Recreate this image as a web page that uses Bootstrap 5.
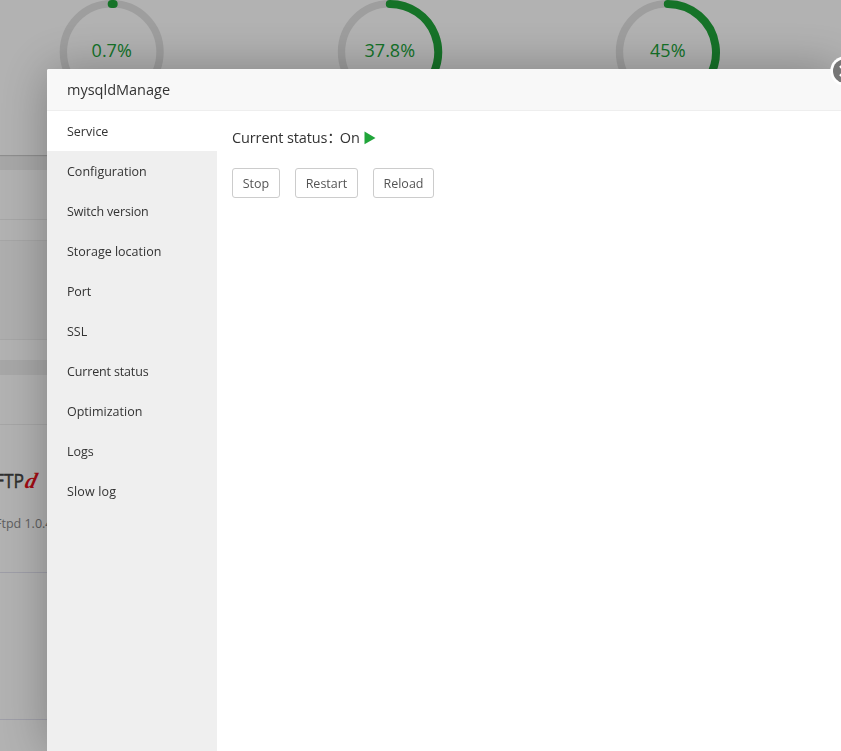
<!DOCTYPE html>
<html lang="en">
<head>
<meta charset="utf-8">
<meta name="viewport" content="width=device-width, initial-scale=1">
<title>mysqldManage</title>
<link href="https://cdn.jsdelivr.net/npm/bootstrap@5.3.0/dist/css/bootstrap.min.css" rel="stylesheet">
<style>
body{font-family:"Open Sans","Noto Sans","Noto Sans CJK SC",sans-serif;font-size:12.5px;line-height:20px;color:#333;background:#f0f0f0;height:751px}
main{height:751px}
.gauges{height:155px;box-shadow:0 1px 1px rgba(0,0,0,.15);padding-left:59px;gap:174px}
.gauge{width:104px;height:104px;overflow:visible}
.gauge text{font-size:18px;fill:#20a53a;text-anchor:middle}
.overview,.software{margin-top:15px}
.overview{height:190px}
.software{height:376px}
.panel-head{height:50px;border-bottom:1px solid #eee}
.overview-body{margin-top:20px;height:100px;background:#f9f9f9;border-top:1px solid #eee;border-bottom:1px solid #eee}
.soft-cell{height:148px;border-bottom:1px solid #e3e3f0}
.soft-cell + .soft-cell{height:147px}
.soft-cell svg{width:47px;height:147px}
.veil{background:rgba(0,0,0,.3);z-index:10}
.dialog{left:47px;top:69px;width:794px;height:682px;z-index:20;box-shadow:1px 1px 50px rgba(0,0,0,.3);border-radius:2px 0 0 0}
.dialog-title{height:42px;padding-left:20px;background:#f8f8f8;border-bottom:1px solid #eee;font-size:14.5px;border-radius:2px 0 0 0}
.side{width:170px;background:#efefef}
.side a{height:40px;padding:2px 0 0 20px;color:#333;text-decoration:none}
.side a.active{background:#fff}
.side .tight{letter-spacing:-.15px}
.side .wide{letter-spacing:.15px}
.pane{padding:17px 15px}
.status{font-size:14.5px;height:20px}
.st-label{letter-spacing:-.12px}
.st-on{margin-left:-2px}
.acts{gap:15px;margin-top:20px}
.act{font-size:12.5px;line-height:18px;height:30px;padding:6px 0 4px;border:1px solid #ccc;border-radius:3px;color:#555;background:#fff}
.w1{width:48px}.w2{width:63px}.w3{width:61px}
.closer{left:830px;top:56px;width:11px;height:30px;z-index:30}
</style>
<script src="https://cdn.jsdelivr.net/npm/bootstrap@5.3.0/dist/js/bootstrap.bundle.min.js"></script>
</head>
<body class="overflow-hidden">
<main class="overflow-hidden">
  <section class="gauges d-flex bg-white">
    <svg class="gauge flex-shrink-0" viewBox="0 0 104 104"><circle cx="52.7" cy="52" r="48.3" fill="none" stroke="#e3e3e3" stroke-width="7.4"/><path d="M52.7 4h2" stroke="#20a53a" stroke-width="8" stroke-linecap="round"/><text x="52.7" y="57">0.7%</text></svg>
    <svg class="gauge flex-shrink-0" viewBox="0 0 104 104"><circle cx="52.8" cy="52" r="48.3" fill="none" stroke="#e3e3e3" stroke-width="7.4"/><path d="M52.8 4A48.3 48.3 0 0 1 86 87.5" fill="none" stroke="#20a53a" stroke-width="8" stroke-linecap="round"/><text x="52.8" y="57">37.8%</text></svg>
    <svg class="gauge flex-shrink-0" viewBox="0 0 104 104"><circle cx="52.8" cy="52" r="48.3" fill="none" stroke="#e3e3e3" stroke-width="7.4"/><path d="M52.8 4A48.3 48.3 0 0 1 67.7 98.2" fill="none" stroke="#20a53a" stroke-width="8" stroke-linecap="round"/><text x="52.8" y="57">45%</text></svg>
  </section>
  <section class="overview bg-white">
    <div class="panel-head"></div>
    <div class="overview-body"></div>
  </section>
  <section class="software bg-white">
    <div class="panel-head"></div>
    <div class="soft-cell">
      <svg viewBox="0 0 47 147">
        <text x="-5" y="63" font-size="20.5" fill="#444" stroke="#444" stroke-width=".5" textLength="29" lengthAdjust="spacingAndGlyphs">FTP</text>
        <text transform="translate(24 63) skewX(-14)" font-family="Liberation Serif" font-style="italic" font-weight="bold" font-size="22" fill="#e8101c">d</text>
        <text x="-5" y="103" font-size="12.5" fill="#888">Ftpd 1.0.49</text>
      </svg>
    </div>
    <div class="soft-cell"></div>
  </section>
</main>
<div class="veil position-fixed top-0 start-0 w-100 h-100"></div>
<div class="dialog position-fixed bg-white d-flex flex-column">
  <div class="dialog-title d-flex align-items-center flex-shrink-0">mysqldManage</div>
  <div class="d-flex flex-grow-1">
    <nav class="side d-flex flex-column flex-shrink-0">
      <a href="#" class="active d-flex align-items-center">Service</a>
      <a href="#" class="d-flex align-items-center">Configuration</a>
      <a href="#" class="tight d-flex align-items-center">Switch version</a>
      <a href="#" class="d-flex align-items-center">Storage location</a>
      <a href="#" class="tight d-flex align-items-center">Port</a>
      <a href="#" class="d-flex align-items-center">SSL</a>
      <a href="#" class="tight d-flex align-items-center">Current status</a>
      <a href="#" class="d-flex align-items-center">Optimization</a>
      <a href="#" class="d-flex align-items-center">Logs</a>
      <a href="#" class="wide d-flex align-items-center">Slow log</a>
    </nav>
    <div class="pane flex-grow-1">
      <div class="status d-flex align-items-center"><span class="st-label">Current status：</span><span class="st-on">On</span><svg class="ms-1" width="12" height="14" viewBox="0 0 12 14"><path d="M0.5 .5L11.5 7L.5 13.3z" fill="#20a53a"/></svg></div>
      <div class="acts d-flex">
        <button class="act w1">Stop</button><button class="act w2">Restart</button><button class="act w3">Reload</button>
      </div>
    </div>
  </div>
</div>
<svg class="closer position-fixed" viewBox="0 0 11 30"><circle cx="15" cy="15" r="14.7" fill="#fff"/><circle cx="15" cy="15" r="12" fill="#777"/><path d="M10 10L20 20M20 10L10 20" stroke="#fff" stroke-width="2.4"/></svg>
</body>
</html>
